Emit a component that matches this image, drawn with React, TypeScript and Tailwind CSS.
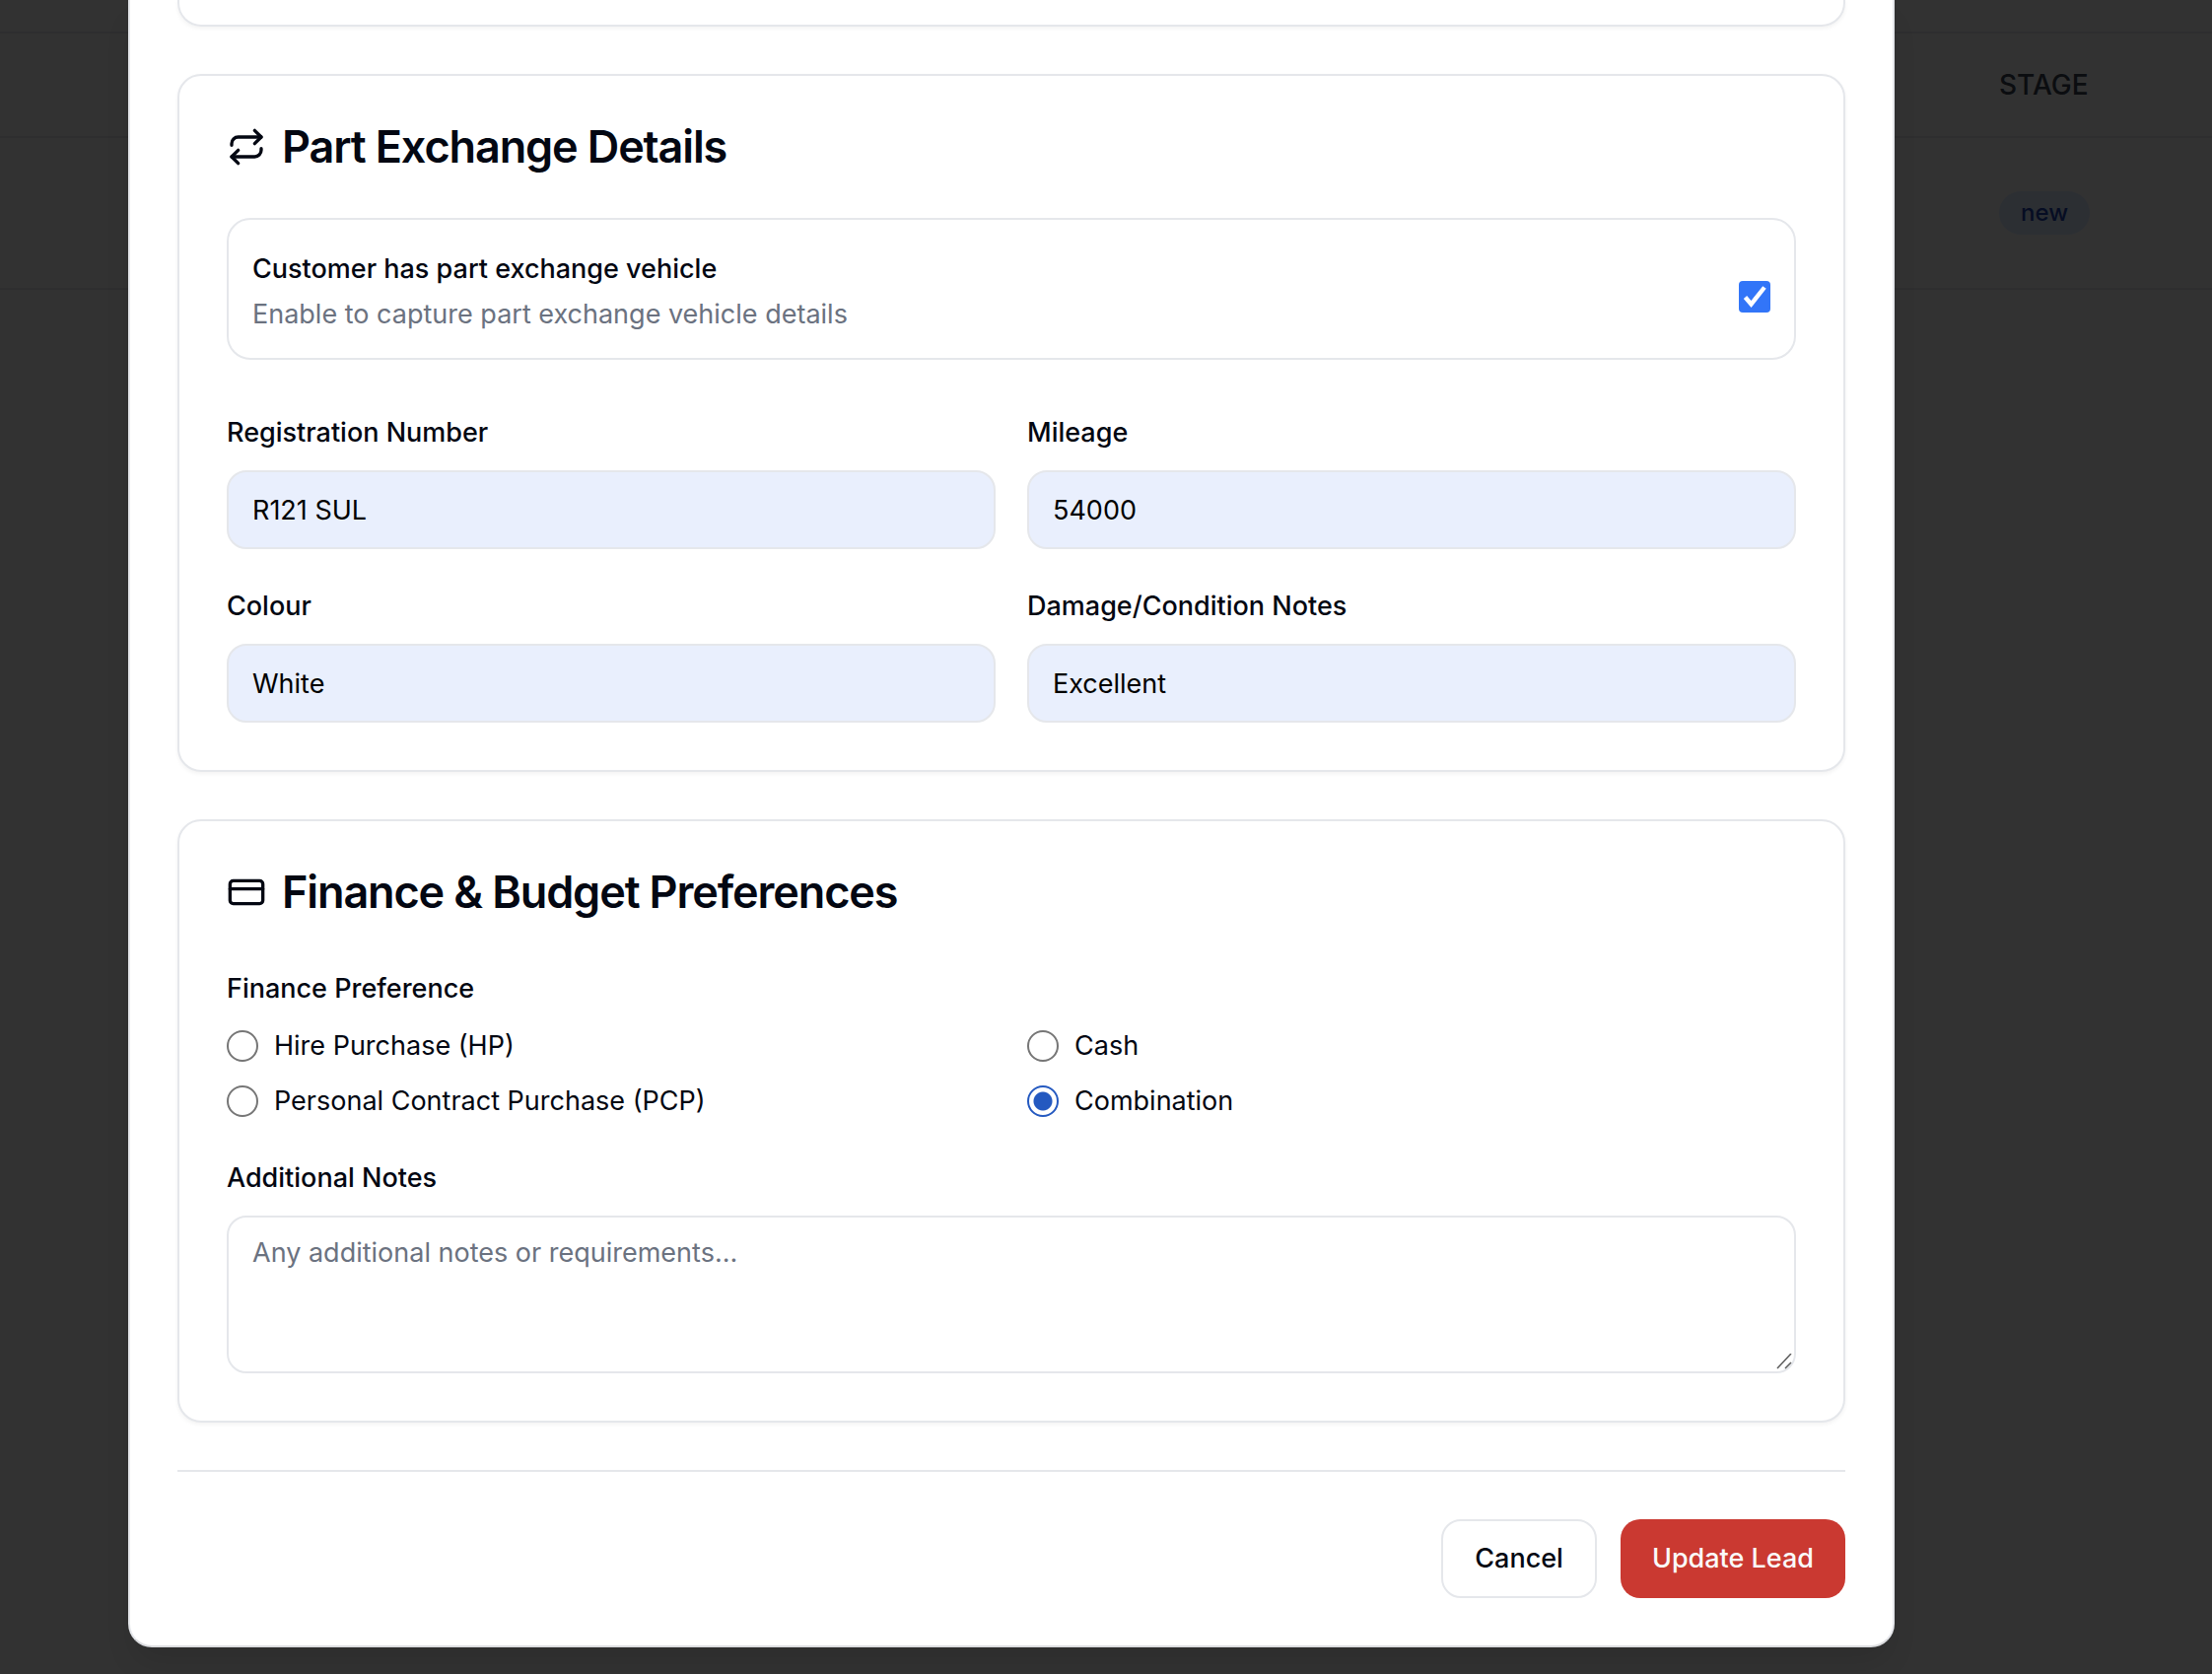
import React from "react";
import { CreditCard, Repeat } from "lucide-react";

type FieldProps = { id: string; label: string; value: string };

function Field({ id, label, value }: FieldProps) {
  return (
    <div className="flex flex-col gap-3">
      <label htmlFor={id} className="text-[27px] leading-[52px] font-medium">
        {label}
      </label>
      <input
        id={id}
        type="text"
        defaultValue={value}
        className="h-20 w-full rounded-[20px] border-2 border-[#e5e7eb] bg-[#e9effd] px-6 text-[27px] text-black"
      />
    </div>
  );
}

function Choice({ id, label, checked }: { id: string; label: string; checked?: boolean }) {
  return (
    <div className="flex h-10 items-center gap-4">
      <input
        id={id}
        type="radio"
        name="finance"
        defaultChecked={checked}
        className="size-8 shrink-0 appearance-none rounded-full border-2 border-[#767676] bg-white checked:border-[#2459c0] checked:bg-[radial-gradient(circle,#2459c0_9px,#ffffff_10px)]"
      />
      <label htmlFor={id} className="text-[27px] leading-10">
        {label}
      </label>
    </div>
  );
}

function Card({ icon, title, children }: { icon: React.ReactNode; title: string; children: React.ReactNode }) {
  return (
    <section className="rounded-3xl border-2 border-[#e5e7eb] bg-white p-12 shadow-[0_2px_4px_rgba(0,0,0,0.05)]">
      <h2 className="mb-12 flex items-center gap-4 text-[45px] leading-[48px] font-semibold tracking-tight">
        {icon}
        {title}
      </h2>
      {children}
    </section>
  );
}

function LeadsTable() {
  return (
    <table className="mt-8 w-full border-collapse">
      <thead>
        <tr className="h-[106px] border-y-2 border-[#e5e7eb]">
          <th className="w-[2028px]" />
          <th className="text-left text-[28px] font-medium text-[#374151]">STAGE</th>
        </tr>
      </thead>
      <tbody>
        <tr className="h-[154px] border-b-2 border-[#e5e7eb]">
          <td />
          <td>
            <span className="inline-flex h-11 items-center rounded-full bg-[#dbeafe] px-[22px] text-2xl font-medium text-[#1e40af]">
              new
            </span>
          </td>
        </tr>
      </tbody>
    </table>
  );
}

export default function App() {
  return (
    <div className="relative h-screen overflow-hidden bg-[#fafafa] font-['Inter',sans-serif] text-[#030712]">
      <LeadsTable />
      <div className="absolute inset-0 flex flex-col justify-end bg-black/80 pr-[322px] pb-[27px] pl-[130px]">
        <div
          role="dialog"
          aria-label="Edit lead"
          className="rounded-b-3xl border-x-2 border-b-2 border-[#e5e7eb] border-b-[#dcdde0] bg-white px-12 pb-12 shadow-[0_20px_30px_-6px_rgba(0,0,0,0.1)]"
        >
          <form className="flex flex-col gap-12">
            <div className="h-[27px] rounded-b-3xl border-x-2 border-b-2 border-[#e5e7eb] shadow-[0_2px_4px_rgba(0,0,0,0.05)]" />

            <Card icon={<Repeat className="size-10" />} title="Part Exchange Details">
              <div className="flex flex-col gap-12">
                <div className="flex items-center justify-between rounded-3xl border-2 border-[#e5e7eb] p-6">
                  <div>
                    <label htmlFor="has-px" className="block text-[27px] leading-[52px] font-medium">
                      Customer has part exchange vehicle
                    </label>
                    <p className="text-[27px] leading-10 text-[#6b7280]">
                      Enable to capture part exchange vehicle details
                    </p>
                  </div>
                  <div className="mt-4 grid size-8 shrink-0">
                    <input
                      id="has-px"
                      type="checkbox"
                      defaultChecked
                      className="col-start-1 row-start-1 size-8 appearance-none rounded-[4px] bg-[#3275f8]"
                    />
                    <svg viewBox="0 0 32 32" className="pointer-events-none col-start-1 row-start-1 size-8" aria-hidden="true">
                      <path d="M6.5 16.5 12.5 23.5 26 6.5" fill="none" stroke="#fff" strokeWidth="4.4" />
                    </svg>
                  </div>
                </div>
                <div className="grid grid-cols-2 gap-8">
                  <Field id="reg" label="Registration Number" value="R121 SUL" />
                  <Field id="mileage" label="Mileage" value="54000" />
                  <Field id="colour" label="Colour" value="White" />
                  <Field id="condition" label="Damage/Condition Notes" value="Excellent" />
                </div>
              </div>
            </Card>

            <Card icon={<CreditCard className="size-10" />} title="Finance & Budget Preferences">
              <div className="flex flex-col gap-8">
                <fieldset>
                  <legend className="mb-3 text-[27px] leading-[52px] font-medium">Finance Preference</legend>
                  <div className="grid grid-cols-2 gap-x-8 gap-y-4">
                    <Choice id="hp" label="Hire Purchase (HP)" />
                    <Choice id="cash" label="Cash" />
                    <Choice id="pcp" label="Personal Contract Purchase (PCP)" />
                    <Choice id="combination" label="Combination" checked />
                  </div>
                </fieldset>
                <div className="flex flex-col gap-3">
                  <label htmlFor="notes" className="text-[27px] leading-[52px] font-medium">
                    Additional Notes
                  </label>
                  <div className="relative flex">
                    <textarea
                      id="notes"
                      placeholder="Any additional notes or requirements..."
                      className="h-40 w-full resize-none rounded-[20px] border-2 border-[#e5e7eb] px-6 py-4 text-[27px] leading-10 placeholder:text-[#6b7280]"
                    />
                    <svg viewBox="0 0 16 16" className="pointer-events-none absolute right-1 bottom-1 size-4" aria-hidden="true">
                      <path d="M1 15 15 0M9 15 15 9" fill="none" stroke="#5c5c5c" strokeWidth="1.5" />
                    </svg>
                  </div>
                </div>
              </div>
            </Card>

            <div className="flex justify-end gap-6 border-t-2 border-[#e5e7eb] pt-12">
              <button type="button" className="h-20 rounded-[20px] border-2 border-[#e5e7eb] bg-white px-8 text-[27px] font-medium">
                Cancel
              </button>
              <button type="submit" className="h-20 rounded-[20px] bg-[#ca3931] px-8 text-[27px] font-medium text-[#fafafa]">
                Update Lead
              </button>
            </div>
          </form>
        </div>
      </div>
    </div>
  );
}
